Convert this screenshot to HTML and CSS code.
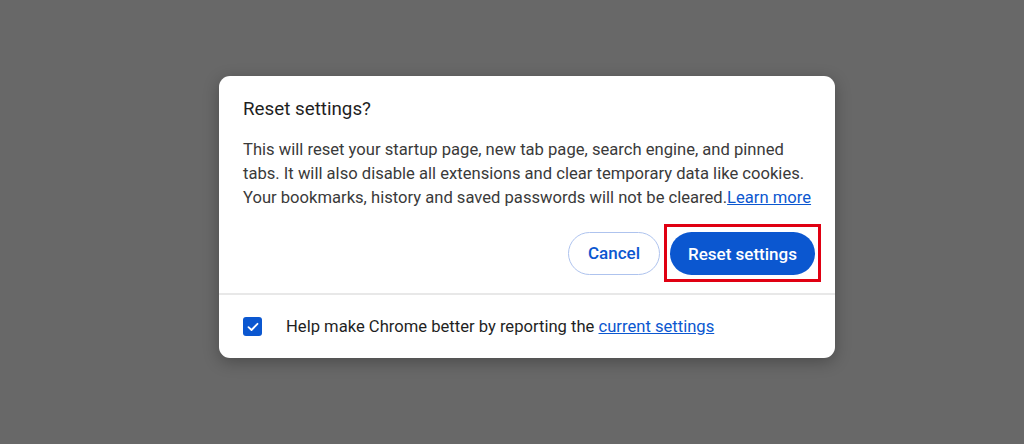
FILE: index.html
```html
<!DOCTYPE html>
<html>
<head>
<meta charset="utf-8">
<link rel="stylesheet" href="styles.css">
</head>
<body>
<div class="backdrop">
  <div class="dialog">
    <div class="main">
      <h1 class="title">Reset settings?</h1>
      <p class="body">This will reset your startup page, new tab page, search engine, and pinned tabs. It will also disable all extensions and clear temporary data like cookies. Your bookmarks, history and saved passwords will not be cleared.<a class="link" href="#">Learn more</a></p>
      <div class="actions">
        <button class="btn cancel">Cancel</button>
        <div class="highlight"><button class="btn primary">Reset settings</button></div>
      </div>
    </div>
    <div class="footer">
      <span class="checkbox"><svg width="12" height="10" viewBox="0 0 12 10"><path d="M1.5 5.2 L4.5 8 L10.5 1.8" fill="none" stroke="#fff" stroke-width="1.8" stroke-linecap="round" stroke-linejoin="round"/></svg></span>
      <span class="footer-text">Help make Chrome better by reporting the <a class="link" href="#">current settings</a></span>
    </div>
  </div>
</div>
</body>
</html>
```
FILE: styles.css
```css
html, body { margin: 0; padding: 0; }
body { background: #686868; font-family: Roboto, "Liberation Sans", sans-serif; }
.backdrop { width: 1024px; height: 444px; display: flex; justify-content: flex-start; align-items: flex-start; padding: 76px 0 0 219px; box-sizing: border-box; }
.dialog { width: 616px; height: 282px; background: #fff; border-radius: 11px; box-shadow: 0 4px 16px rgba(0,0,0,0.28); display: flex; flex-direction: column; overflow: hidden; }
.main { padding: 21px 14px 0 24px; border-bottom: 2px solid #e8e8e8; height: 219px; box-sizing: border-box; }
.title { margin: 0; font-size: 18.8px; font-weight: 400; color: #1f1f1f; line-height: 24px; }
.body { margin: 17px 8px 0 0; font-size: 16.6px; line-height: 24px; color: #3a3a3a; }
.link { color: #0b57d0; text-decoration: underline; }
.actions { display: flex; justify-content: flex-end; align-items: center; gap: 4px; margin-top: 14px; }
.btn { font-family: inherit; font-size: 17px; font-weight: 500; height: 43px; border-radius: 22px; padding: 0; cursor: pointer; }
.cancel { background: #fff; color: #0b57d0; border: 1px solid #aec3ee; width: 92px; }
.primary { background: #0b57d0; color: #fff; border: none; width: 145px; }
.highlight { border: 3px solid #e00012; padding: 5px 3px 4px 3px; display: flex; }
.footer { flex: 1; display: flex; align-items: center; padding: 0 24px; }
.checkbox { width: 19px; height: 19px; border-radius: 3px; background: #0b57d0; display: flex; align-items: center; justify-content: center; margin-right: 24px; }
.footer-text { font-size: 16.6px; color: #1f1f1f; }
```
